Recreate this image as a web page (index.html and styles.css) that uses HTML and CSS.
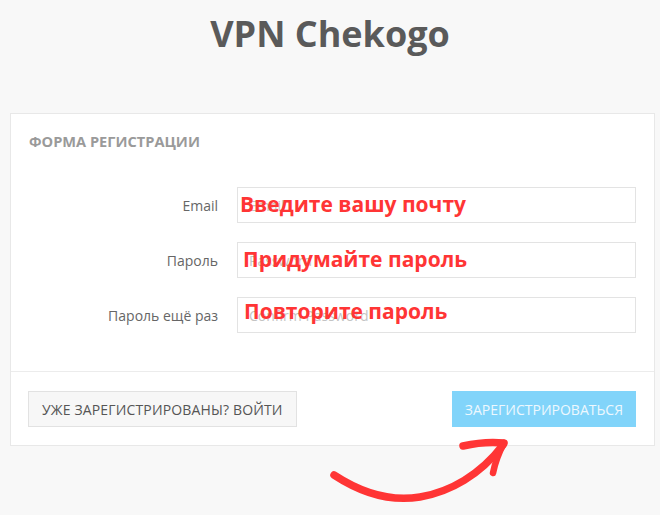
FILE: index.html
```html
<!DOCTYPE html>
<html lang="ru">
<head>
<meta charset="utf-8">
<title>VPN Chekogo</title>
<link rel="stylesheet" href="styles.css">
</head>
<body>
<div class="page">
  <h1 class="title">VPN Chekogo</h1>
  <div class="card">
    <div class="card-body">
      <h2 class="card-heading">Форма регистрации</h2>
      <div class="form">
        <label class="label">Email</label>
        <div class="field">
          <input class="input" type="text" placeholder="Email">
          <span class="note note-1">Введите вашу почту</span>
        </div>
        <label class="label">Пароль</label>
        <div class="field">
          <input class="input" type="text" placeholder="Password">
          <span class="note note-2">Придумайте пароль</span>
        </div>
        <label class="label">Пароль ещё раз</label>
        <div class="field">
          <input class="input" type="text" placeholder="Confirm Password">
          <span class="note note-3">Повторите пароль</span>
        </div>
      </div>
    </div>
    <div class="card-footer">
      <button class="btn btn-default">Уже зарегистрированы? Войти</button>
      <button class="btn btn-primary">Зарегистрироваться</button>
    </div>
  </div>
  <svg class="arrow" width="200" height="85" viewBox="0 0 200 85">
    <path d="M14 45 C 40 62, 70 72, 100 67 C 130 62, 160 45, 183 15" fill="none" stroke="#ff3535" stroke-width="7.5" stroke-linecap="round"/>
    <path d="M143 16 Q 165 11 184 13" fill="none" stroke="#ff3535" stroke-width="7.5" stroke-linecap="round"/>
    <path d="M184 13 Q 176 28 173 43" fill="none" stroke="#ff3535" stroke-width="6.5" stroke-linecap="round"/>
  </svg>
</div>
</body>
</html>
```

FILE: styles.css
```css
* { box-sizing: border-box; }

html, body {
  margin: 0;
  padding: 0;
  background: #f8f8f8;
  font-family: "Open Sans", "Noto Sans", sans-serif;
  color: #555;
}

.page {
  position: relative;
  width: 660px;
  height: 515px;
  padding: 12px 5px 0 10px;
}

.title {
  margin: 0 0 57px -10px;
  width: 660px;
  text-align: center;
  font-size: 36px;
  line-height: 44px;
  font-weight: 700;
  color: #5a5a5a;
}

.card {
  background: #fff;
  border: 1px solid #e8e8e8;
}

.card-body {
  padding: 17px 18px 38px 18px;
}

.card-heading {
  margin: 0 0 36px 0;
  font-size: 14.6px;
  line-height: 20px;
  font-weight: 700;
  text-transform: uppercase;
  color: #9a9a9a;
}

.form {
  display: grid;
  grid-template-columns: 189px 1fr;
  column-gap: 19px;
  row-gap: 19px;
}

.label {
  display: flex;
  align-items: center;
  justify-content: flex-end;
  height: 36px;
  font-size: 14px;
  color: #666;
}

.field {
  position: relative;
  height: 36px;
}

.input {
  display: block;
  width: 100%;
  height: 36px;
  margin: 0;
  padding: 0 11px;
  border: 1px solid #e3e3e3;
  background: #fff;
  font-family: "Open Sans", sans-serif;
  font-size: 14px;
  color: #555;
  outline: none;
}

.input::placeholder {
  color: #c4c4c4;
}

.note {
  position: absolute;
  font-size: 21px;
  line-height: 24px;
  font-weight: 700;
  color: #ff3535;
  white-space: nowrap;
  pointer-events: none;
}

.note-1 { left: 3px; top: 5px; }
.note-2 { left: 6px; top: 5px; }
.note-3 { left: 7px; top: 2px; }

.card-footer {
  display: flex;
  justify-content: space-between;
  border-top: 1px solid #ececec;
  padding: 19px 18px 18px 17px;
}

.btn {
  height: 36px;
  margin: 0;
  padding: 0 13px;
  font-family: "Open Sans", sans-serif;
  font-size: 14px;
  letter-spacing: 0.15px;
  text-transform: uppercase;
  cursor: pointer;
}

.btn-default {
  background: #f7f7f7;
  border: 1px solid #e2e2e2;
  color: #555;
}

.btn-primary {
  background: #81d4fa;
  border: 1px solid #81d4fa;
  color: #eef8fe;
  padding: 0 12px;
  letter-spacing: 0;
}

.arrow {
  position: absolute;
  left: 320px;
  top: 430px;
}
```
